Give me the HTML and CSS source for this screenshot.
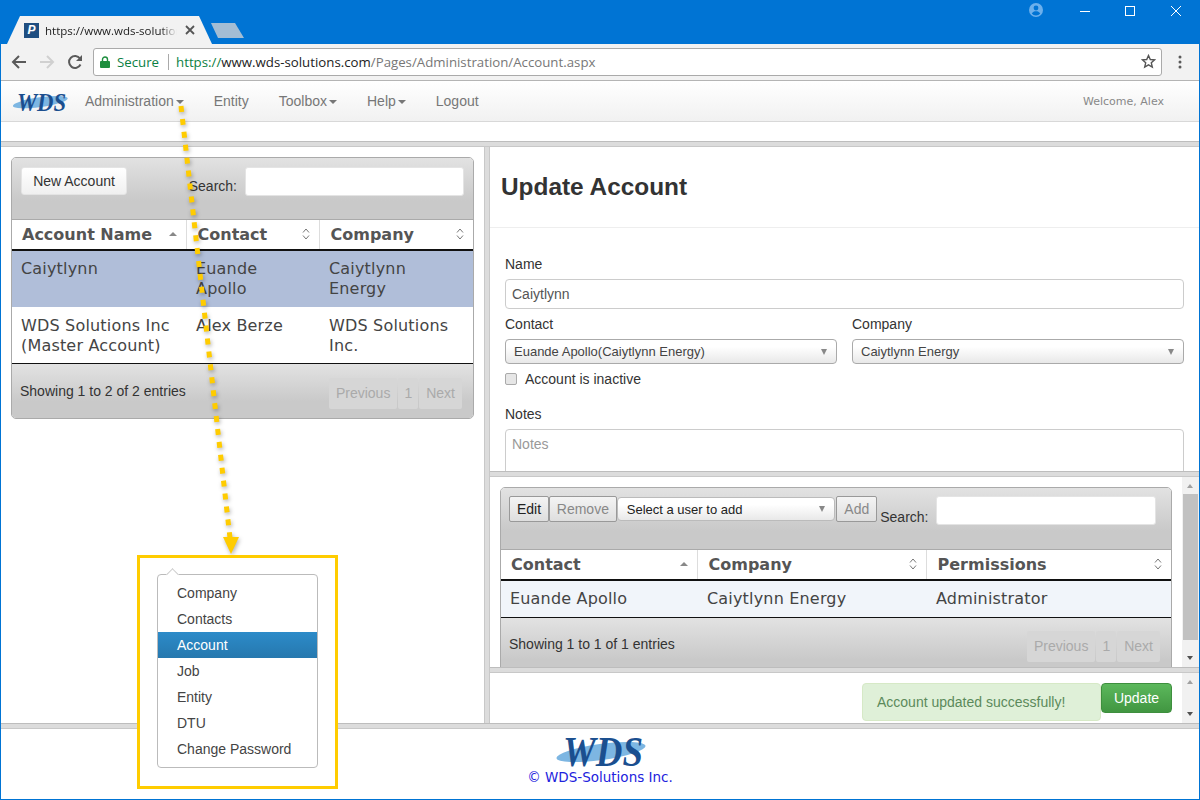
FILE: index.html
```html
<!DOCTYPE html>
<html lang="en">
<head>
    <meta charset="UTF-8">
    <title>Account</title>
    <link rel="stylesheet" href="styles.css">
</head>
<body>
<div class="window">
    <!-- browser chrome -->
    <div class="titlebar">
        <div class="tab">
            <span class="favicon">P</span>
            <span class="tab-title">https://www.wds-solution</span>
            <svg class="tab-close" width="10" height="10" viewBox="0 0 10 10"><path d="M1 1l8 8M9 1l-8 8" stroke="#555" stroke-width="1.8"/></svg>
        </div>
        <div class="newtab"></div>
        <div class="winctl">
            <svg class="profile" width="14" height="14" viewBox="0 0 14 14"><circle cx="7" cy="7" r="7" fill="#6cb0ec"/><circle cx="7" cy="5" r="2.4" fill="#0074d4"/><path d="M2.8 10.6c1-1.7 2.4-2.3 4.2-2.3s3.2.6 4.2 2.3c-1 1.2-2.5 2-4.2 2s-3.200-.8-4.200-2z" fill="#0074d4"/></svg>
            <svg class="ctl-min" width="10" height="10" viewBox="0 0 10 10"><path d="M0 5.500h10" stroke="#fff"/></svg>
            <svg class="ctl-max" width="10" height="10" viewBox="0 0 10 10"><rect x=".5" y=".5" width="9" height="9" fill="none" stroke="#fff"/></svg>
            <svg class="ctl-close" width="10" height="10" viewBox="0 0 10 10"><path d="M0 0l10 10M10 0L0 10" stroke="#fff"/></svg>
        </div>
    </div>
    <div class="toolbar">
        <svg class="tool-btn" width="16" height="16" viewBox="0 0 16 16"><path d="M15 8H2M8 2L2 8l6 6" fill="none" stroke="#5a5a5a" stroke-width="2"/></svg>
        <svg class="tool-btn" width="16" height="16" viewBox="0 0 16 16"><path d="M1 8h13M8 2l6 6-6 6" fill="none" stroke="#d0d0d0" stroke-width="2"/></svg>
        <svg class="tool-btn" width="16" height="16" viewBox="0 0 16 16"><path d="M13.500 10.500A6 6 0 1 1 13 4.500" fill="none" stroke="#5a5a5a" stroke-width="2"/><path d="M15 1v6H9z" fill="#5a5a5a"/></svg>
        <div class="omnibox">
            <svg class="lock" width="10" height="12" viewBox="0 0 10 12"><path d="M2.500 5V3.500a2.500 2.500 0 0 1 5 0V5" fill="none" stroke="#1e8e3e" stroke-width="1.400"/><rect y="5" width="10" height="7" rx="1" fill="#1e8e3e"/></svg>
            <span class="secure">Secure</span>
            <span class="url"><span class="url-scheme">https://</span>www.wds-solutions.com<span class="url-path">/Pages/Administration/Account.aspx</span></span>
            <svg class="star" width="15" height="15" viewBox="0 0 15 15"><path d="M7.500 1.500l1.800 4 4.300.4-3.300 2.900 1 4.200-3.800-2.200-3.800 2.200 1-4.200L1.400 5.900l4.300-.4z" fill="none" stroke="#555" stroke-width="1.400"/></svg>
        </div>
        <svg class="dots" width="4" height="14" viewBox="0 0 4 14"><circle cx="2" cy="2" r="1.500" fill="#5a5a5a"/><circle cx="2" cy="7" r="1.500" fill="#5a5a5a"/><circle cx="2" cy="12" r="1.500" fill="#5a5a5a"/></svg>
    </div>

    <!-- site nav -->
    <nav class="navbar">
        <svg class="logo logo-small" width="56" height="21" viewBox="0 0 91 34">
            <ellipse cx="46" cy="18" rx="45" ry="8" fill="#7db6e2" transform="rotate(-8 46 18)"/>
            <text x="8" y="32" class="logo-text" textLength="80" lengthAdjust="spacingAndGlyphs">WDS</text>
        </svg>
        <a class="nav-item caret">Administration</a>
        <a class="nav-item">Entity</a>
        <a class="nav-item caret">Toolbox</a>
        <a class="nav-item caret">Help</a>
        <a class="nav-item">Logout</a>
        <span class="welcome">Welcome, Alex</span>
    </nav>
    <div class="nav-gap"></div>
    <div class="hsplit"></div>

    <div class="panes">
        <!-- account list -->
        <div class="left-pane">
            <div class="dt-card">
                <div class="dt-top">
                    <button class="btn-light">New Account</button>
                    <label class="dt-search">Search:</label>
                    <input class="dt-input dt-input-left" type="text">
                </div>
                <table class="dt-table accounts">
                    <thead>
                        <tr>
                            <th class="col-name">Account Name<svg class="sort" width="8" height="12" viewBox="0 0 8 12"><path d="M0 8h8L4 4z" fill="#888"/></svg></th>
                            <th class="col-contact">Contact<svg class="sort" width="8" height="12" viewBox="0 0 8 12"><path d="M1 4.500L4 1l3 3.500M1 7.500L4 11l3-3.500" fill="none" stroke="#777"/></svg></th>
                            <th class="col-company">Company<svg class="sort" width="8" height="12" viewBox="0 0 8 12"><path d="M1 4.500L4 1l3 3.500M1 7.500L4 11l3-3.500" fill="none" stroke="#777"/></svg></th>
                        </tr>
                    </thead>
                    <tbody>
                        <tr class="row-selected"><td>Caiytlynn</td><td>Euande Apollo</td><td>Caiytlynn Energy</td></tr>
                        <tr class="row-plain"><td>WDS Solutions Inc (Master Account)</td><td>Alex Berze</td><td>WDS Solutions Inc.</td></tr>
                    </tbody>
                </table>
                <div class="dt-bottom">
                    <span class="dt-info">Showing 1 to 2 of 2 entries</span>
                    <div class="pager"><span>Previous</span><span class="page-num">1</span><span>Next</span></div>
                </div>
            </div>
        </div>

        <div class="vsplit"></div>

        <div class="right-pane">
            <!-- update form -->
            <div class="form-pane">
                <h1 class="page-title">Update Account</h1>
                <hr class="rule">
                <label class="field-label label-name">Name</label>
                <input class="text-input" type="text" value="Caiytlynn">
                <div class="form-row">
                    <div class="form-col">
                        <label class="field-label">Contact</label>
                        <div class="select-box"><span>Euande Apollo(Caiytlynn Energy)</span><i class="select-arrow"></i></div>
                    </div>
                    <div class="form-col">
                        <label class="field-label">Company</label>
                        <div class="select-box"><span>Caiytlynn Energy</span><i class="select-arrow"></i></div>
                    </div>
                </div>
                <div class="check-row"><span class="checkbox"></span>Account is inactive</div>
                <label class="field-label label-notes">Notes</label>
                <div class="textarea">Notes</div>
            </div>
            <div class="hsplit"></div>

            <!-- users of the account -->
            <div class="users-pane">
                <div class="dt-card users-card">
                    <div class="dt-top users-top">
                        <button class="btn-square btn-edit">Edit</button>
                        <button class="btn-square btn-off btn-remove">Remove</button>
                        <div class="select-box select-user"><span>Select a user to add</span><i class="select-arrow"></i></div>
                        <button class="btn-square btn-off btn-add">Add</button>
                        <label class="dt-search users-search">Search:</label>
                        <input class="dt-input dt-input-right" type="text">
                    </div>
                    <table class="dt-table users">
                        <thead>
                            <tr>
                                <th class="col-u1">Contact<svg class="sort" width="8" height="12" viewBox="0 0 8 12"><path d="M0 8h8L4 4z" fill="#888"/></svg></th>
                                <th class="col-u2">Company<svg class="sort" width="8" height="12" viewBox="0 0 8 12"><path d="M1 4.500L4 1l3 3.500M1 7.500L4 11l3-3.500" fill="none" stroke="#777"/></svg></th>
                                <th class="col-u3">Permissions<svg class="sort" width="8" height="12" viewBox="0 0 8 12"><path d="M1 4.500L4 1l3 3.500M1 7.500L4 11l3-3.500" fill="none" stroke="#777"/></svg></th>
                            </tr>
                        </thead>
                        <tbody>
                            <tr class="row-odd"><td>Euande Apollo</td><td>Caiytlynn Energy</td><td>Administrator</td></tr>
                        </tbody>
                    </table>
                    <div class="dt-bottom users-bottom">
                        <span class="dt-info">Showing 1 to 1 of 1 entries</span>
                        <div class="pager"><span>Previous</span><span class="page-num">1</span><span>Next</span></div>
                    </div>
                </div>
                <div class="scrollbar">
                    <i class="arrow-up"></i>
                    <div class="thumb"></div>
                    <i class="arrow-down"></i>
                </div>
            </div>
            <div class="hsplit"></div>

            <!-- save bar -->
            <div class="save-pane">
                <div class="save-content">
                    <div class="alert-ok">Account updated successfully!</div>
                    <button class="btn-update">Update</button>
                </div>
                <div class="scrollbar scrollbar-short">
                    <i class="arrow-up"></i>
                    <i class="arrow-down"></i>
                </div>
            </div>
        </div>
    </div>

    <div class="hsplit"></div>
    <footer class="footer">
        <svg class="logo logo-big" width="91" height="34" viewBox="0 0 91 34">
            <ellipse cx="46" cy="18" rx="45" ry="8" fill="#7db6e2" transform="rotate(-8 46 18)"/>
            <text x="8" y="32" class="logo-text" textLength="80" lengthAdjust="spacingAndGlyphs">WDS</text>
        </svg>
        <div class="copyright">© WDS-Solutions Inc.</div>
    </footer>

    <!-- callout drawn over the page -->
    <svg class="callout-arrow" width="1200" height="800" viewBox="0 0 1200 800">
        <path d="M181 106L230 538" stroke="#fc0" stroke-width="5" stroke-dasharray="6 7" fill="none"/>
        <path d="M223 537h16l-8 17z" fill="#fc0"/>
    </svg>
    <div class="callout">
        <div class="menu">
            <i class="menu-tip"></i>
            <a>Company</a>
            <a>Contacts</a>
            <a class="menu-active">Account</a>
            <a>Job</a>
            <a>Entity</a>
            <a>DTU</a>
            <a>Change Password</a>
        </div>
    </div>
</div>
</body>
</html>
```
FILE: styles.css
```css
* {
    box-sizing: border-box;
}
body {
    margin: 0;
    font-family: "Liberation Sans", Arial, sans-serif;
    font-size: 14px;
    color: #333;
    background: #fff;
}
.window {
    position: relative;
    width: 1200px;
    height: 800px;
    overflow: hidden;
    display: flex;
    flex-direction: column;
    border: 1px solid #0074d4;
    border-width: 0 1px 1px 1px;
}

/* browser chrome */
.titlebar {
    height: 44px;
    flex: none;
    margin: 0 -1px;
    background: #0074d4;
    display: flex;
    align-items: flex-end;
    padding-left: 7px;
}
.tab {
    width: 205px;
    height: 28px;
    background: #f2f2f2;
    clip-path: polygon(0 100%, 13px 0, 192px 0, 100% 100%);
    display: flex;
    align-items: center;
    padding-left: 17px;
    font-family: "Open Sans", sans-serif;
    font-size: 11.500px;
    color: #222;
}
.favicon {
    width: 15px;
    height: 15px;
    background: #1f4e80;
    color: #fff;
    font: italic bold 12px/15px "Liberation Sans", sans-serif;
    text-align: center;
    flex: none;
}
.tab-title {
    width: 132px;
    margin-left: 6px;
    white-space: nowrap;
    -webkit-mask-image: linear-gradient(to right, #000 88%, transparent);
    mask-image: linear-gradient(to right, #000 88%, transparent);
}
.tab-close {
    margin-left: 8px;
}
.newtab {
    width: 33px;
    height: 15px;
    margin: 0 0 6px -1px;
    background: #a3bdd4;
    clip-path: polygon(0 0, 24px 0, 100% 100%, 7px 100%);
}
.winctl {
    align-self: flex-start;
    margin-left: auto;
    display: flex;
    align-items: flex-start;
    padding-top: 6px;
}
.profile {
    margin: -2px 0 0 0;
    position: relative;
    top: -1px;
}
.ctl-min {
    margin-left: 37px;
}
.ctl-max {
    margin-left: 35px;
}
.ctl-close {
    margin: 0 19px 0 36px;
}
.toolbar {
    height: 37px;
    flex: none;
    background: #f2f2f2;
    border-bottom: 1px solid #b4b4b4;
    display: flex;
    align-items: center;
    padding: 0 0 1px 10px;
}
.tool-btn {
    margin-right: 12px;
}
.omnibox {
    width: 1069px;
    height: 28px;
    margin-left: -2px;
    background: #fff;
    border: 1px solid #aaa;
    border-radius: 3px;
    display: flex;
    align-items: center;
    padding-left: 6px;
    font-family: "Open Sans", sans-serif;
    font-size: 13.250px;
}
.secure {
    margin-left: 7px;
    padding-right: 9px;
    border-right: 1px solid #aaa;
    line-height: 16px;
    color: #0b8043;
}
.url {
    margin-left: 7px;
    color: #222;
    white-space: nowrap;
}
.url-scheme {
    color: #0b8043;
}
.url-path {
    color: #777;
}
.star {
    margin-left: auto;
    margin-right: 5px;
}
.dots {
    margin-left: 16px;
}

/* site nav */
.navbar {
    height: 41px;
    flex: none;
    background: linear-gradient(to bottom, #fff, #f1f1f1);
    border-bottom: 1px solid #d8d8d8;
    display: flex;
    align-items: center;
    padding-left: 11px;
}
.logo {
    overflow: visible;
}
.logo-small {
    margin-right: 2px;
    flex: none;
}
.logo-text {
    font: italic bold 42px "Liberation Serif", serif;
    fill: #1b4f8f;
}
.nav-item {
    padding: 0 15px;
    color: #777;
}
.caret::after {
    content: "";
    display: inline-block;
    margin-left: 2px;
    vertical-align: middle;
    border-top: 4px solid #777;
    border-left: 4px solid transparent;
    border-right: 4px solid transparent;
}
.welcome {
    margin-left: auto;
    margin-right: 35px;
    font-family: "DejaVu Sans", sans-serif;
    font-size: 11px;
    color: #888;
}
.nav-gap {
    height: 19px;
    flex: none;
}
.hsplit {
    height: 6px;
    flex: none;
    background: #dcdcdc;
    border-top: 1px solid #bdbdbd;
    border-bottom: 1px solid #c8c8c8;
}

/* panes */
.panes {
    height: 576px;
    flex: none;
    display: flex;
}
.left-pane {
    width: 483px;
    flex: none;
    padding: 10px 0 0 10px;
}
.vsplit {
    width: 6px;
    flex: none;
    background: #dcdcdc;
    border-left: 1px solid #c8c8c8;
    border-right: 1px solid #c8c8c8;
}
.right-pane {
    flex: 1;
    min-width: 0;
    display: flex;
    flex-direction: column;
}

/* data table card */
.dt-card {
    width: 463px;
    border: 1px solid #aaa;
    border-radius: 5px;
    overflow: hidden;
}
.dt-top {
    height: 62px;
    background: linear-gradient(to bottom, #e2e2e2, #c9c9c9 70%);
    border-bottom: 1px solid #aaa;
    display: flex;
    align-items: flex-start;
    padding: 9px 9px 0 9px;
}
.btn-light {
    width: 106px;
    height: 28px;
    background: linear-gradient(to bottom, #fff, #f0f0f0);
    border: 1px solid #e4e4e4;
    border-radius: 3px;
    font: 14px "Liberation Sans", sans-serif;
    color: #333;
}
.dt-search {
    margin-left: auto;
    margin-top: 11px;
    margin-right: 8px;
}
.dt-input {
    height: 29px;
    background: #fff;
    border: 1px solid #e4e4e4;
    border-radius: 3px;
}
.dt-input-left {
    width: 219px;
}
.dt-input-right {
    width: 220px;
}
.dt-table {
    width: 100%;
    table-layout: fixed;
    border-collapse: collapse;
    font-family: "DejaVu Sans", sans-serif;
    font-size: 16px;
    line-height: 20px;
    color: #444;
}
.dt-table th {
    height: 30px;
    position: relative;
    padding: 0 10px 0 11px;
    text-align: left;
    color: #555;
    border-bottom: 2px solid #111;
    border-right: 1px solid #ddd;
}
.dt-table th:first-child {
    padding-left: 10px;
}
.dt-table th:last-child {
    border-right: 0;
}
.sort {
    position: absolute;
    right: 9px;
    top: 8px;
}
.dt-table td {
    padding: 8px 10px;
    vertical-align: top;
    letter-spacing: .18px;
}
.dt-table td:first-child {
    padding-left: 9px;
}
.row-plain td {
    padding-top: 9px;
    padding-bottom: 7px;
}
.accounts tbody tr:last-child td,
.users tbody tr:last-child td {
    border-bottom: 1px solid #111;
}
.col-name {
    width: 174px;
}
.col-contact {
    width: 133px;
}
.row-selected td {
    background: #b0bed9;
}
.row-odd td {
    background: #f1f5fa;
}
.dt-bottom {
    height: 54px;
    background: linear-gradient(to bottom, #e2e2e2, #c9c9c9 70%);
    display: flex;
    justify-content: space-between;
    padding: 0 11px 0 8px;
}
.dt-info {
    margin-top: 19px;
}
.pager {
    display: flex;
    gap: 1px;
    height: 31px;
    margin-top: 14px;
    color: #aaa;
    line-height: 30px;
}
.pager span {
    background: #d6d6d6;
    padding: 0 7px;
    border-radius: 2px;
}
.pager .page-num {
    padding: 0 6px;
}

/* update form */
.form-pane {
    height: 324px;
    flex: none;
    overflow: hidden;
    padding: 0 15px;
}
.page-title {
    margin: 25px 0 0 -4px;
    font-size: 24.400px;
    line-height: 29px;
    color: #333;
}
.rule {
    margin: 26px -15px 0 -15px;
    border: 0;
    border-top: 1px solid #eee;
}
.field-label {
    display: block;
    line-height: 20px;
    margin-bottom: 5px;
}
.label-name {
    margin-top: 26px;
    margin-bottom: 5px;
}
.text-input {
    display: block;
    width: 679px;
    height: 30px;
    padding: 0 6px;
    border: 1px solid #ccc;
    border-radius: 4px;
    font: 14px "Liberation Sans", sans-serif;
    color: #555;
}
.form-row {
    display: flex;
    gap: 15px;
    margin-top: 5px;
}
.form-col {
    width: 332px;
}
.select-box {
    height: 25px;
    border: 1px solid #aaa;
    border-radius: 4px;
    background: linear-gradient(to bottom, #fff 30%, #e8e8e8);
    display: flex;
    align-items: center;
    justify-content: space-between;
    padding: 0 8px;
    font-size: 13px;
    color: #444;
}
.select-arrow {
    border-top: 6px solid #888;
    border-left: 3.500px solid transparent;
    border-right: 3.500px solid transparent;
    margin-right: 1px;
}
.check-row {
    display: flex;
    align-items: center;
    height: 20px;
    margin-top: 5px;
}
.checkbox {
    width: 12px;
    height: 12px;
    margin-right: 8px;
    background: #e6e6e6;
    border: 1px solid #aaa;
    border-radius: 2px;
}
.label-notes {
    margin-top: 15px;
}
.textarea {
    width: 679px;
    height: 80px;
    padding: 6px;
    border: 1px solid #ccc;
    border-radius: 4px;
    color: #999;
}

/* users table */
.users-pane {
    height: 190px;
    flex: none;
    overflow: hidden;
    display: flex;
    padding: 10px 0 0 10px;
    position: relative;
}
.users-card {
    width: 672px;
    height: 220px;
    flex: none;
}
.users-top {
    padding-top: 8px;
    padding-left: 8px;
    padding-right: 15px;
}
.btn-square {
    height: 26px;
    padding: 0;
    background: linear-gradient(to bottom, #f4f4f4, #dedede);
    border: 1px solid #999;
    border-radius: 2px;
    font: 14px "Liberation Sans", sans-serif;
    color: #222;
}
.btn-edit {
    width: 40px;
}
.btn-remove {
    width: 68px;
}
.btn-off {
    color: #888;
}
.select-user {
    width: 219px;
    height: 24px;
    margin-top: 1px;
    padding-left: 9px;
    border-color: #bbb;
    color: #222;
}
.btn-add {
    width: 41px;
    margin-left: 1px;
}
.users-search {
    margin: 13px 8px 0 3px;
}
.col-u1 {
    width: 196px;
}
.col-u2 {
    width: 229px;
}
.users-bottom {
    height: 60px;
}
.users-bottom .dt-info {
    margin-top: 18px;
}
.users-bottom .pager {
    margin-top: 13px;
}
.scrollbar {
    position: absolute;
    right: 0;
    top: 0;
    bottom: 0;
    width: 17px;
    background: #f1f1f1;
}
.thumb {
    position: absolute;
    left: 1px;
    right: 1px;
    top: 17px;
    height: 146px;
    background: #c1c1c1;
}
.arrow-up,
.arrow-down {
    position: absolute;
    left: 5px;
    border-left: 3.500px solid transparent;
    border-right: 3.500px solid transparent;
}
.arrow-up {
    top: 7px;
    border-bottom: 4px solid #a0a0a0;
}
.arrow-down {
    bottom: 7px;
    border-top: 4px solid #505050;
}

/* save bar */
.save-pane {
    flex: 1;
    position: relative;
    min-height: 0;
    overflow: hidden;
}
.save-content {
    display: flex;
    justify-content: flex-end;
    align-items: flex-start;
    padding: 10px 27px 0 0;
}
.alert-ok {
    width: 239px;
    height: 38px;
    padding-left: 14px;
    line-height: 36px;
    background: #dff0d8;
    border: 1px solid #d6e9c6;
    border-radius: 4px;
    color: #5b8a5b;
}
.btn-update {
    width: 71px;
    height: 30px;
    background: linear-gradient(to bottom, #5cb85c, #419641);
    border: 1px solid #3e8f3e;
    border-radius: 4px;
    font: 14px "Liberation Sans", sans-serif;
    color: #fff;
}

/* footer */
.footer {
    flex: 1;
    text-align: center;
    padding-top: 5px;
}
.logo-big {
    display: block;
    margin: 0 auto;
}
.copyright {
    margin-top: 1px;
    font-family: "DejaVu Sans", sans-serif;
    font-size: 13.500px;
    line-height: 16px;
    color: #2222dd;
}

/* callout over the page */
.callout-arrow {
    position: absolute;
    left: -1px;
    top: 0;
    filter: drop-shadow(1px 2px 2px rgba(0, 0, 0, .3));
}
.callout {
    position: absolute;
    left: 136px;
    top: 555px;
    width: 201px;
    height: 234px;
    background: #fff;
    border: 3px solid #fc0;
    padding: 16px 0 0 17px;
}
.menu {
    position: relative;
    width: 161px;
    height: 194px;
    padding-top: 5px;
    background: #fff;
    border: 1px solid #bbb;
    border-radius: 4px;
}
.menu a {
    display: block;
    height: 26px;
    padding-left: 19px;
    line-height: 26px;
    color: #444;
}
.menu a.menu-active {
    background: linear-gradient(to bottom, #2c8bc9, #2678ae);
    color: #fff;
}
.menu-tip {
    position: absolute;
    left: 10px;
    top: -5px;
    width: 9px;
    height: 9px;
    background: #fff;
    border-top: 1px solid #ccc;
    border-left: 1px solid #ccc;
    transform: rotate(45deg);
}
```
